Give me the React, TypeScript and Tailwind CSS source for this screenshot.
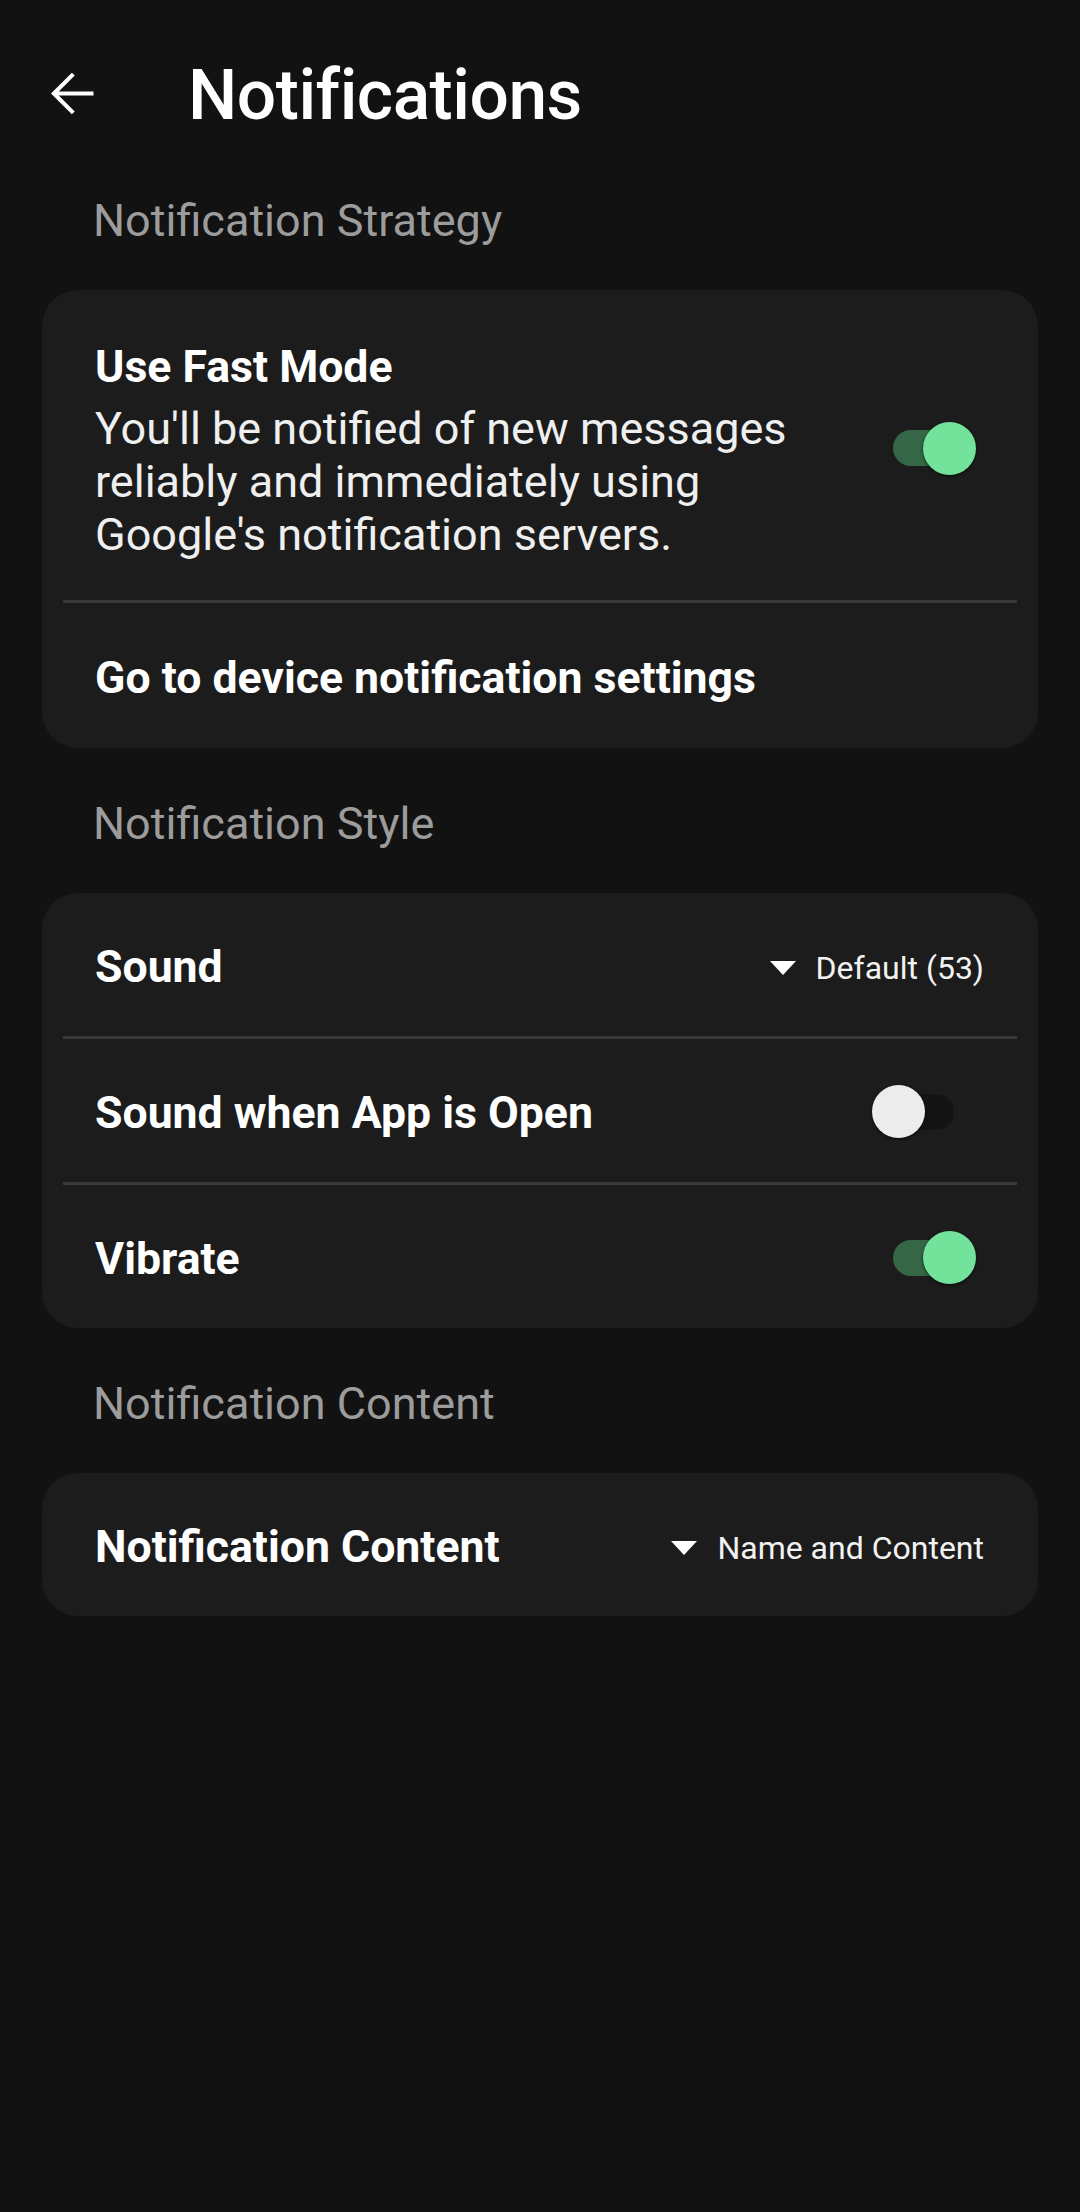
import React from 'react'

const font = { fontFamily: 'Roboto, "Noto Sans", sans-serif' }

export default function App() {
  return (
    <main className="min-h-[2212px] w-[1080px] bg-[#121212] text-white" style={font}>
      {/* Top bar */}
      <header className="h-[145px] pt-[56px] flex items-start">
        <div className="flex items-center h-[80px]">
          <svg className="ml-[41px] w-[63px] h-[63px] -mt-[6px]" viewBox="0 0 24 24" fill="none" stroke="white" strokeWidth={1.55} strokeLinecap="butt" strokeLinejoin="miter">
            <path d="M20 12H5.4" />
            <path d="M12.3 4.6L4.9 12l7.4 7.4" />
          </svg>
          <h1 className="ml-[84px] text-[69.5px] leading-[80px] font-medium tracking-[-0.5px]">Notifications</h1>
        </div>
      </header>

      <SectionHeader>Notification Strategy</SectionHeader>
      <Card>
        <div className="flex items-center pl-[53px] pr-[62px] pt-[51px] pb-[39px]">
          <div className="flex-1 pr-[36px]">
            <p className="text-[44.6px] leading-[53px] font-bold">Use Fast Mode</p>
            <p className="mt-[8px] text-[45px] leading-[53px] text-[#efefef]">
              You'll be notified of new messages reliably and immediately using Google's notification servers.
            </p>
          </div>
          <div className="mb-[6px]">
            <Toggle on />
          </div>
        </div>
        <Divider />
        <div className="h-[145px] flex items-center pl-[53px] pt-[6px]">
          <p className="text-[44.6px] font-bold">Go to device notification settings</p>
        </div>
      </Card>

      <SectionHeader>Notification Style</SectionHeader>
      <Card>
        <Row label="Sound" right={<Dropdown value="Default (53)" />} />
        <Divider />
        <Row label="Sound when App is Open" right={<div className="mr-[8px] -mt-[4px]"><Toggle on={false} /></div>} />
        <Divider />
        <Row label="Vibrate" right={<div className="mr-[8px] -mt-[4px]"><Toggle on /></div>} />
      </Card>

      <SectionHeader>Notification Content</SectionHeader>
      <Card>
        <Row label="Notification Content" right={<Dropdown value="Name and Content" />} />
      </Card>
    </main>
  )
}

function SectionHeader({ children }: { children: React.ReactNode }) {
  return (
    <div className="h-[145px] flex items-center pl-[93px] pt-[6px]">
      <h2 className="text-[45px] leading-[53px] text-[#9c9c9c]">{children}</h2>
    </div>
  )
}

function Card({ children }: { children: React.ReactNode }) {
  return <div className="mx-[42px] bg-[#1c1c1c] rounded-[36px] overflow-hidden">{children}</div>
}

function Divider() {
  return <div className="mx-[21px] h-[3px] bg-[#383838]" />
}

function Row({ label, right }: { label: string; right: React.ReactNode }) {
  return (
    <div className="h-[143px] flex items-center justify-between pl-[53px] pr-[54px] pt-[6px]">
      <p className="text-[44.6px] font-bold">{label}</p>
      {right}
    </div>
  )
}

function Dropdown({ value }: { value: string }) {
  return (
    <div className="flex items-center gap-[20px]">
      <svg width="26" height="14" viewBox="0 0 26 14">
        <polygon points="0,0 26,0 13,14" fill="white" />
      </svg>
      <span className="text-[32px] text-[#f2f2f2]">{value}</span>
    </div>
  )
}

function Toggle({ on }: { on: boolean }) {
  return (
    <div className="relative w-[104px] h-[53px] flex items-center">
      <div className={`ml-[21px] w-[61px] h-[36px] rounded-full ${on ? 'bg-[#356645]' : 'bg-[#141414]'}`} />
      <div
        className={`absolute top-0 w-[53px] h-[53px] rounded-full shadow-[0_1px_3px_rgba(0,0,0,0.7)] ${
          on ? 'left-[51px] bg-[#73e39b]' : 'left-0 bg-[#ececec]'
        }`}
      />
    </div>
  )
}
